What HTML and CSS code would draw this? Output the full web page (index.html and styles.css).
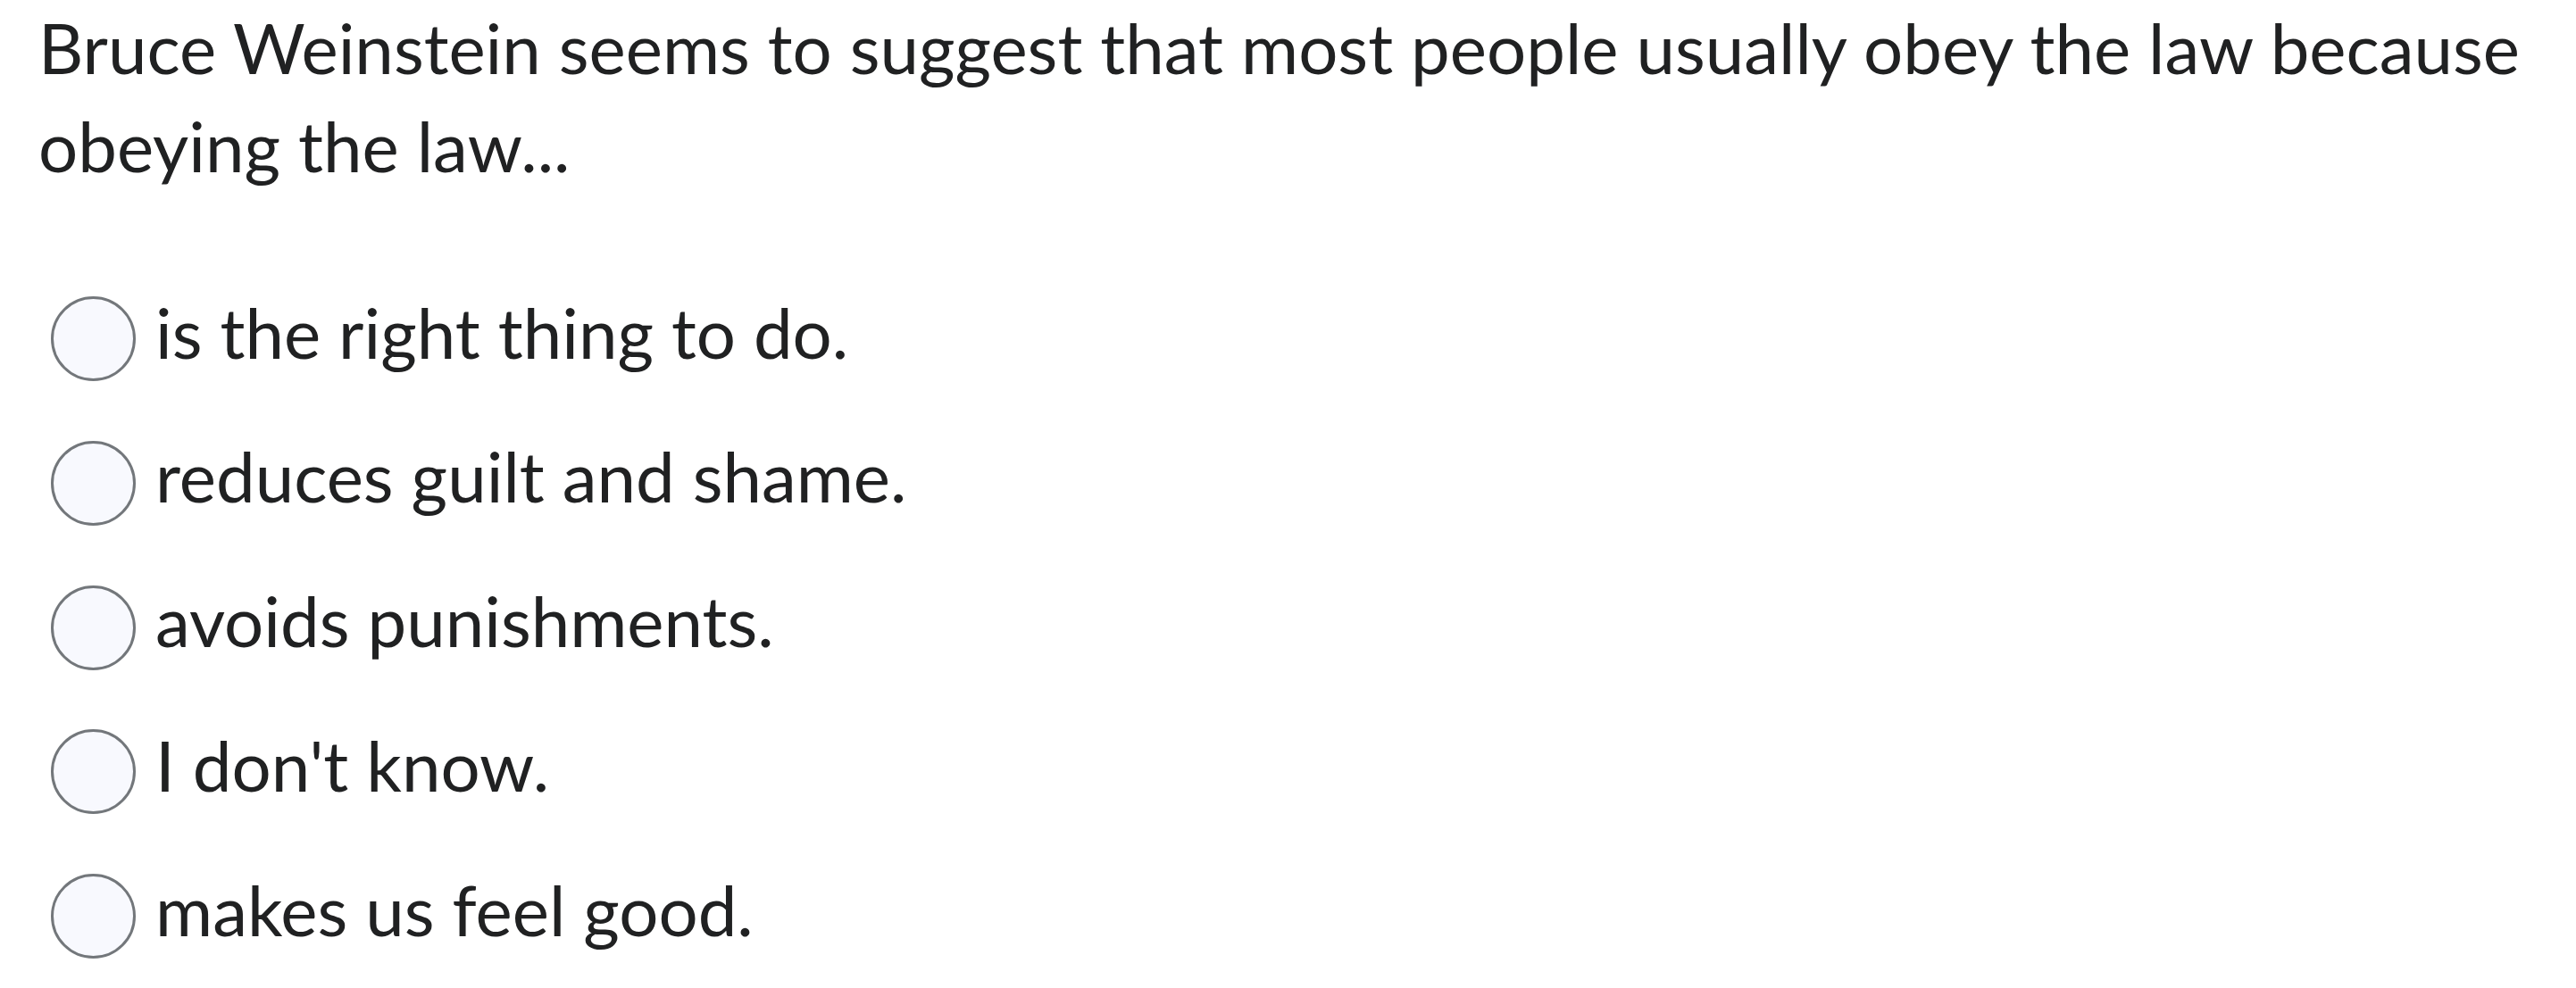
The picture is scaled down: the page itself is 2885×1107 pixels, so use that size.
FILE: index.html
```html
<!DOCTYPE html>
<html lang="en">
<head>
<meta charset="utf-8">
<title>Quiz question</title>
<link rel="stylesheet" href="styles.css">
</head>
<body>
<div class="quiz">
  <p class="question">Bruce Weinstein seems to suggest that most people usually obey the law because obeying the law...</p>
  <ul class="options">
    <li class="option"><span class="radio"></span><span class="label">is the right thing to do.</span></li>
    <li class="option"><span class="radio"></span><span class="label">reduces guilt and shame.</span></li>
    <li class="option"><span class="radio"></span><span class="label">avoids punishments.</span></li>
    <li class="option"><span class="radio"></span><span class="label">I don't know.</span></li>
    <li class="option"><span class="radio"></span><span class="label">makes us feel good.</span></li>
  </ul>
</div>
</body>
</html>
```

FILE: styles.css
```css
html, body {
  margin: 0;
  padding: 0;
  background: #ffffff;
}

body {
  font-family: Lato, "Noto Sans", sans-serif;
  color: #202122;
}

.quiz {
  padding: 0 40px 0 43px;
}

.question {
  margin: -2px 0 0 0;
  font-size: 78px;
  line-height: 110px;
  max-width: 2820px;
}

.options {
  list-style: none;
  margin: 98px 0 0 0;
  padding: 0;
  display: flex;
  flex-direction: column;
  gap: 50.75px;
}

.option {
  display: flex;
  align-items: center;
  gap: 22px;
  font-size: 78px;
  line-height: 110px;
}

.radio {
  flex: none;
  box-sizing: border-box;
  width: 95px;
  height: 95px;
  margin: 16px 0 0 14px;
  border: 3.5px solid #73777b;
  border-radius: 50%;
  background: #f8f9fe;
}
```
